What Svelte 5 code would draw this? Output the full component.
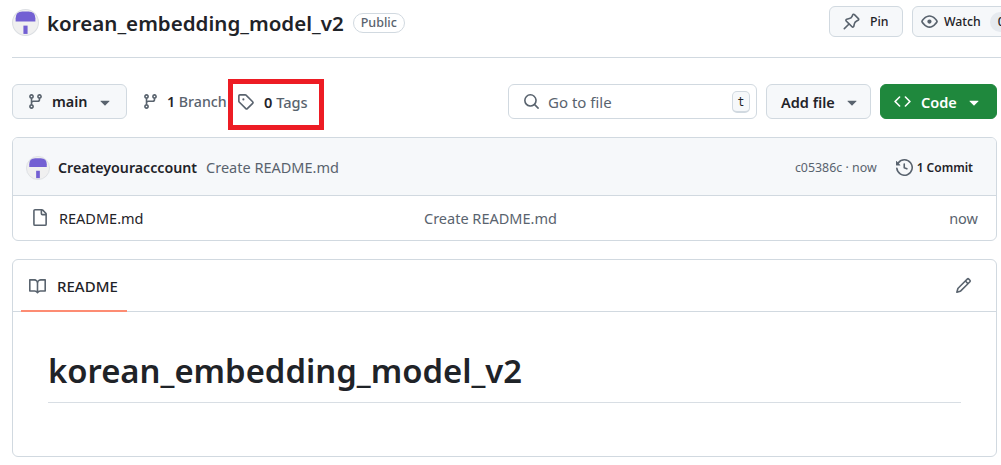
<script>
  const branch = "M9.5 3.25a2.25 2.25 0 1 1 3 2.122V6A2.5 2.5 0 0 1 10 8.5H6a1 1 0 0 0-1 1v1.128a2.251 2.251 0 1 1-1.5 0V5.372a2.25 2.25 0 1 1 1.5 0v1.836A2.493 2.493 0 0 1 6 7h4a1 1 0 0 0 1-1v-.628A2.25 2.25 0 0 1 9.5 3.25Zm-6 0a.75.75 0 1 0 1.5 0 .75.75 0 0 0-1.5 0Zm8.25-.75a.75.75 0 1 0 0 1.5.75.75 0 0 0 0-1.5ZM4.25 12a.75.75 0 1 0 0 1.5.75.75 0 0 0 0-1.5Z";
  const caret = "m4.427 7.427 3.396 3.396a.25.25 0 0 0 .354 0l3.396-3.396A.25.25 0 0 0 11.396 7H4.604a.25.25 0 0 0-.177.427Z";
  const tag = "M1 7.775V2.75C1 1.784 1.784 1 2.75 1h5.025c.464 0 .91.184 1.238.513l6.25 6.25a1.75 1.75 0 0 1 0 2.474l-5.026 5.026a1.75 1.75 0 0 1-2.474 0l-6.25-6.25A1.752 1.752 0 0 1 1 7.775Zm1.5 0c0 .066.026.13.073.177l6.25 6.25a.25.25 0 0 0 .354 0l5.025-5.025a.25.25 0 0 0 0-.354l-6.25-6.25a.25.25 0 0 0-.177-.073H2.75a.25.25 0 0 0-.25.25ZM6 5a1 1 0 1 1 0 2 1 1 0 0 1 0-2Z";
  const search = "M10.68 11.74a6 6 0 0 1-7.922-8.982 6 6 0 0 1 8.982 7.922l3.04 3.04a.749.749 0 0 1-.326 1.275.749.749 0 0 1-.734-.215ZM11.5 7a4.499 4.499 0 1 0-8.997 0A4.499 4.499 0 0 0 11.5 7Z";
  const code = "m11.28 3.22 4.25 4.25a.75.75 0 0 1 0 1.06l-4.25 4.25a.749.749 0 0 1-1.275-.326.749.749 0 0 1 .215-.734L13.94 8l-3.72-3.72a.749.749 0 0 1 .326-1.275.749.749 0 0 1 .734.215Zm-6.56 0a.751.751 0 0 1 1.042.018.751.751 0 0 1 .018 1.042L2.06 8l3.72 3.72a.749.749 0 0 1-.326 1.275.749.749 0 0 1-.734-.215L.47 8.53a.75.75 0 0 1 0-1.06Z";
  const pin = "m11.294.984 3.722 3.722a1.75 1.75 0 0 1-.504 2.826l-1.327.613a3.089 3.089 0 0 0-1.707 2.084l-.584 2.454c-.317 1.332-1.972 1.8-2.94.832L5.75 11.311 1.78 15.28a.749.749 0 0 1-1.275-.326.749.749 0 0 1 .215-.734l3.969-3.97-2.204-2.204c-.968-.968-.5-2.623.832-2.94l2.454-.584a3.08 3.08 0 0 0 2.084-1.707l.613-1.327a1.75 1.75 0 0 1 2.826-.504ZM6.283 9.723l2.732 2.731a.25.25 0 0 0 .42-.119l.584-2.454a4.586 4.586 0 0 1 2.537-3.098l1.328-.613a.25.25 0 0 0 .072-.404l-3.722-3.722a.25.25 0 0 0-.404.072l-.613 1.328a4.584 4.584 0 0 1-3.098 2.537l-2.454.584a.25.25 0 0 0-.119.42l2.731 2.732Z";
  const eye = "M8 2c1.981 0 3.671.992 4.933 2.078 1.27 1.091 2.187 2.345 2.637 3.023a1.62 1.62 0 0 1 0 1.798c-.45.678-1.367 1.932-2.637 3.023C11.67 13.008 9.981 14 8 14c-1.981 0-3.671-.992-4.933-2.078C1.797 10.83.88 9.576.43 8.898a1.62 1.62 0 0 1 0-1.798c.45-.677 1.367-1.931 2.637-3.022C4.33 2.992 6.019 2 8 2ZM1.679 7.932a.12.12 0 0 0 0 .136c.411.622 1.241 1.75 2.366 2.717C5.176 11.758 6.527 12.5 8 12.5c1.473 0 2.825-.742 3.955-1.715 1.124-.967 1.954-2.096 2.366-2.717a.12.12 0 0 0 0-.136c-.412-.621-1.242-1.75-2.366-2.717C10.824 4.242 9.473 3.5 8 3.5c-1.473 0-2.825.742-3.955 1.715-1.124.967-1.954 2.096-2.366 2.717ZM8 10a2 2 0 1 1-.001-3.999A2 2 0 0 1 8 10Z";
  const file = "M2 1.75C2 .784 2.784 0 3.75 0h6.586c.464 0 .909.184 1.237.513l2.914 2.914c.329.328.513.773.513 1.237v9.586A1.75 1.75 0 0 1 13.25 16h-9.5A1.75 1.75 0 0 1 2 14.25Zm1.75-.25a.25.25 0 0 0-.25.25v12.5c0 .138.112.25.25.25h9.5a.25.25 0 0 0 .25-.25V6h-2.75A1.75 1.75 0 0 1 9 4.25V1.5Zm6.75.062V4.25c0 .138.112.25.25.25h2.688l-.011-.013-2.914-2.914-.013-.011Z";
  const history = "m.427 1.927 1.215 1.215a8.002 8.002 0 1 1-1.6 5.685.75.75 0 1 1 1.493-.154 6.5 6.5 0 1 0 1.18-4.458l1.358 1.358A.25.25 0 0 1 3.896 6H.25A.25.25 0 0 1 0 5.75V2.104a.25.25 0 0 1 .427-.177ZM7.75 4a.75.75 0 0 1 .75.75v2.992l2.028.812a.75.75 0 0 1-.557 1.392l-2.5-1A.751.751 0 0 1 7 8.25v-3.5A.75.75 0 0 1 7.75 4Z";
  const book = "M0 1.75A.75.75 0 0 1 .75 1h4.253c1.227 0 2.317.59 3 1.501A3.743 3.743 0 0 1 11.006 1h4.245a.75.75 0 0 1 .75.75v10.5a.75.75 0 0 1-.75.75h-4.507a2.25 2.25 0 0 0-1.591.659l-.622.621a.75.75 0 0 1-1.06 0l-.622-.621A2.25 2.25 0 0 0 5.258 13H.75a.75.75 0 0 1-.75-.75Zm7.251 10.324.004-5.073-.002-2.253A2.25 2.25 0 0 0 5.003 2.5H1.5v9h3.757a3.75 3.75 0 0 1 1.994.574ZM8.755 4.75l-.004 7.322a3.752 3.752 0 0 1 1.992-.572H14.5v-9h-3.495a2.25 2.25 0 0 0-2.25 2.25Z";
  const pencil = "M11.013 1.427a1.75 1.75 0 0 1 2.474 0l1.086 1.086a1.75 1.75 0 0 1 0 2.474l-8.61 8.61c-.21.21-.47.364-.756.445l-3.251.93a.75.75 0 0 1-.927-.928l.929-3.25c.081-.286.235-.547.445-.758l8.61-8.61Zm.176 4.823L9.75 4.81l-6.286 6.287a.253.253 0 0 0-.064.108l-.558 1.953 1.953-.558a.253.253 0 0 0 .108-.064Zm1.238-3.763a.25.25 0 0 0-.354 0L10.811 3.75l1.439 1.44 1.263-1.263a.25.25 0 0 0 0-.354Z";
</script>

{#snippet icon(d, cls = "")}
  <svg class="icon {cls}" viewBox="0 0 16 16" aria-hidden="true"><path {d} /></svg>
{/snippet}

{#snippet avatar(cls)}
  <svg class={cls} viewBox="0 0 26 26" aria-hidden="true">
    <circle cx="13" cy="13" r="12.5" fill="#f0f0f0" stroke="#dcdfe3" />
    <path d="M3.5 12 V9 Q3.5 2.5 10 2.5 H16 Q22.5 2.5 22.5 9 V12 Z" fill="#7360d3" />
    <rect x="11" y="16" width="4" height="8" fill="#7360d3" />
  </svg>
{/snippet}

<div class="page">
  <header class="repo-head">
    {@render avatar("avatar-lg")}
    <h2 class="repo-name">korean_embedding_model_v2</h2>
    <span class="public">Public</span>
    <div class="head-actions">
      <button class="btn pin">{@render icon(pin)}<span>Pin</span></button>
      <button class="btn watch">{@render icon(eye)}<span>Watch</span><span class="counter">0</span></button>
    </div>
  </header>

  <div class="toolbar">
    <button class="btn main-btn">
      {@render icon(branch)}<span class="strong">main</span>{@render icon(caret, "caret")}
    </button>
    <a class="meta branches">{@render icon(branch)}<span><b>1</b> Branch</span></a>
    <a class="meta tags">{@render icon(tag)}<span><b>0</b> Tags</span></a>
    <div class="search">
      {@render icon(search)}<span class="placeholder">Go to file</span><kbd>t</kbd>
    </div>
    <button class="btn add-file"><span class="strong">Add file</span>{@render icon(caret, "caret")}</button>
    <button class="btn code">{@render icon(code)}<span>Code</span>{@render icon(caret, "caret")}</button>
  </div>

  <section class="files">
    <div class="commit-row">
      {@render avatar("avatar-sm")}
      <span class="author">Createyouracccount</span>
      <span class="msg">Create README.md</span>
      <span class="sha">c05386c · now</span>
      <span class="commits">{@render icon(history)}<span>1 Commit</span></span>
    </div>
    <div class="file-row">
      {@render icon(file)}
      <span class="fname">README.md</span>
      <span class="fmsg">Create README.md</span>
      <span class="ftime">now</span>
    </div>
  </section>

  <section class="readme">
    <div class="tabbar">
      <div class="tab">{@render icon(book)}<span>README</span></div>
      {@render icon(pencil, "edit")}
    </div>
    <div class="body">
      <h1>korean_embedding_model_v2</h1>
    </div>
  </section>

  <div class="highlight"></div>
</div>

<style>
  :global(body) { margin: 0; background: #fff; overflow: hidden; }
  .page {
    position: relative;
    width: 1001px;
    height: 465px;
    overflow: hidden;
    padding: 0 4px 0 12px;
    box-sizing: border-box;
    font-family: "Noto Sans", "Open Sans", sans-serif;
    font-size: 14.5px;
    color: #1f2328;
  }
  .icon { width: 17px; height: 17px; fill: #59636e; flex: none; display: block; }
  .icon.caret { width: 20px; height: 20px; fill: #59636e; }
  button { font: inherit; color: inherit; cursor: pointer; }

  .repo-head {
    display: flex;
    align-items: center;
    margin-right: -4px;
    border-bottom: 1px solid #d1d9e0;
    height: 45px;
    padding-bottom: 12px;
    white-space: nowrap;
  }
  .avatar-lg { width: 27px; height: 27px; flex: none; margin-right: 8px; }
  .repo-name { margin: 0; font-size: 20.55px; font-weight: 600; }
  .public {
    margin-left: 9px;
    border: 1px solid #d1d9e0;
    border-radius: 10px;
    padding: 0 7px;
    line-height: 18px;
    font-size: 12.5px;
    font-weight: 500;
    color: #59636e;
  }
  .head-actions {
    margin-left: auto;
    display: flex;
    gap: 9px;
    width: 172px;
    flex: none;
    align-self: flex-start;
    margin-top: 6px;
  }
  .btn {
    display: flex;
    align-items: center;
    box-sizing: border-box;
    background: #f6f8fa;
    border: 1px solid #d1d9e0;
    border-radius: 6px;
    padding: 0;
    white-space: nowrap;
    font-weight: 500;
  }
  .pin { width: 74px; height: 31px; flex: none; padding-left: 13px; gap: 10px; font-size: 12.3px; }
  .watch { width: 120px; height: 31px; flex: none; padding-left: 8px; gap: 6px; font-size: 12.3px; }
  .counter { background: #e6eaef; border-radius: 10px; margin-left: 3px; padding: 0 8px; line-height: 20px; }

  .toolbar {
    display: flex;
    align-items: center;
    height: 35px;
    margin-top: 26px;
    white-space: nowrap;
  }
  .main-btn { width: 115px; height: 35px; padding-left: 14px; flex: none; }
  .main-btn .strong { margin-left: 8px; font-weight: 600; font-size: 14.4px; }
  .main-btn .icon.caret { margin-left: 7px; }
  .meta { display: flex; align-items: center; color: #59636e; font-size: 14.2px; font-weight: 500; }
  .meta b { color: #1f2328; font-weight: 600; }
  .branches { margin-left: 15px; gap: 8px; width: 95px; flex: none; }
  .tags { gap: 10px; width: 271px; flex: none; font-size: 14.6px; }
  .search {
    display: flex;
    align-items: center;
    box-sizing: border-box;
    width: 249px;
    height: 35px;
    flex: none;
    border: 1px solid #d1d9e0;
    border-radius: 6px;
    padding: 0 6px 0 14px;
    background: #fff;
  }
  .placeholder { margin-left: 8px; color: #59636e; flex: 1; font-size: 15px; }
  kbd {
    font-family: "DejaVu Sans Mono", "Liberation Mono", monospace;
    font-size: 11.5px;
    color: #1f2328;
    width: 18px;
    height: 22px;
    line-height: 20px;
    text-align: center;
    box-sizing: border-box;
    border: 1px solid #d1d9e0;
    border-bottom-width: 2px;
    border-radius: 5px;
    background: #f6f8fa;
  }
  .add-file { width: 105px; height: 35px; flex: none; margin-left: 9px; padding-left: 14px; gap: 7px; }
  .add-file .strong { font-weight: 600; }
  .code {
    width: 117px;
    height: 35px;
    flex: none;
    margin-left: 9px;
    padding-left: 13px;
    gap: 10px;
    background: #1f883d;
    border-color: #1f883d;
    color: #fff;
    font-weight: 600;
  }
  .code .icon { fill: #fff; }
  .code .icon.caret { fill: #fff; margin-left: -3px; }

  .files {
    margin-top: 18px;
    border: 1px solid #d1d9e0;
    border-radius: 6px;
    height: 104px;
    box-sizing: border-box;
    overflow: hidden;
  }
  .commit-row {
    display: flex;
    align-items: center;
    height: 58px;
    box-sizing: border-box;
    padding: 1px 23px 0 13px;
    background: #f6f8fa;
    border-bottom: 1px solid #d1d9e0;
    white-space: nowrap;
  }
  .avatar-sm { width: 24px; height: 24px; flex: none; margin-right: 8px; margin-top: 1px; }
  .author { font-weight: 600; font-size: 14.2px; }
  .msg { margin-left: 9px; color: #59636e; }
  .sha { margin-left: auto; font-size: 12.4px; color: #59636e; }
  .commits { display: flex; align-items: center; gap: 4px; margin-left: 19px; font-size: 12px; font-weight: 600; }
  .file-row {
    display: grid;
    grid-template-columns: 18px 375px 1fr auto;
    align-items: center;
    height: 45px;
    padding: 0 18px 2px;
    box-sizing: border-box;
    white-space: nowrap;
  }
  .fname { margin-left: 10px; }
  .fmsg, .ftime { color: #59636e; }

  .readme {
    margin-top: 18px;
    border: 1px solid #d1d9e0;
    border-radius: 6px;
    height: 198px;
    box-sizing: border-box;
  }
  .tabbar {
    display: flex;
    align-items: center;
    justify-content: space-between;
    height: 52px;
    box-sizing: border-box;
    border-bottom: 1px solid #d1d9e0;
    padding: 0 24px 0 8px;
  }
  .tab {
    display: flex;
    align-items: center;
    gap: 11px;
    height: 52px;
    box-sizing: border-box;
    width: 106px;
    padding: 2px 0 0 8px;
    border-bottom: 2px solid #fd8c73;
    font-weight: 500;
    font-size: 15px;
    margin-bottom: -1px;
  }
  .body { padding: 35px 35px 0 35px; }
  h1 {
    margin: 0;
    font-size: 32.85px;
    font-weight: 600;
    line-height: 48px;
    padding-bottom: 7px;
    border-bottom: 1px solid #d8dee4;
    white-space: nowrap;
  }

  .highlight {
    position: absolute;
    left: 228px;
    top: 79px;
    width: 96px;
    height: 51px;
    box-sizing: border-box;
    border: 5px solid #ed1c24;
    pointer-events: none;
  }
</style>
